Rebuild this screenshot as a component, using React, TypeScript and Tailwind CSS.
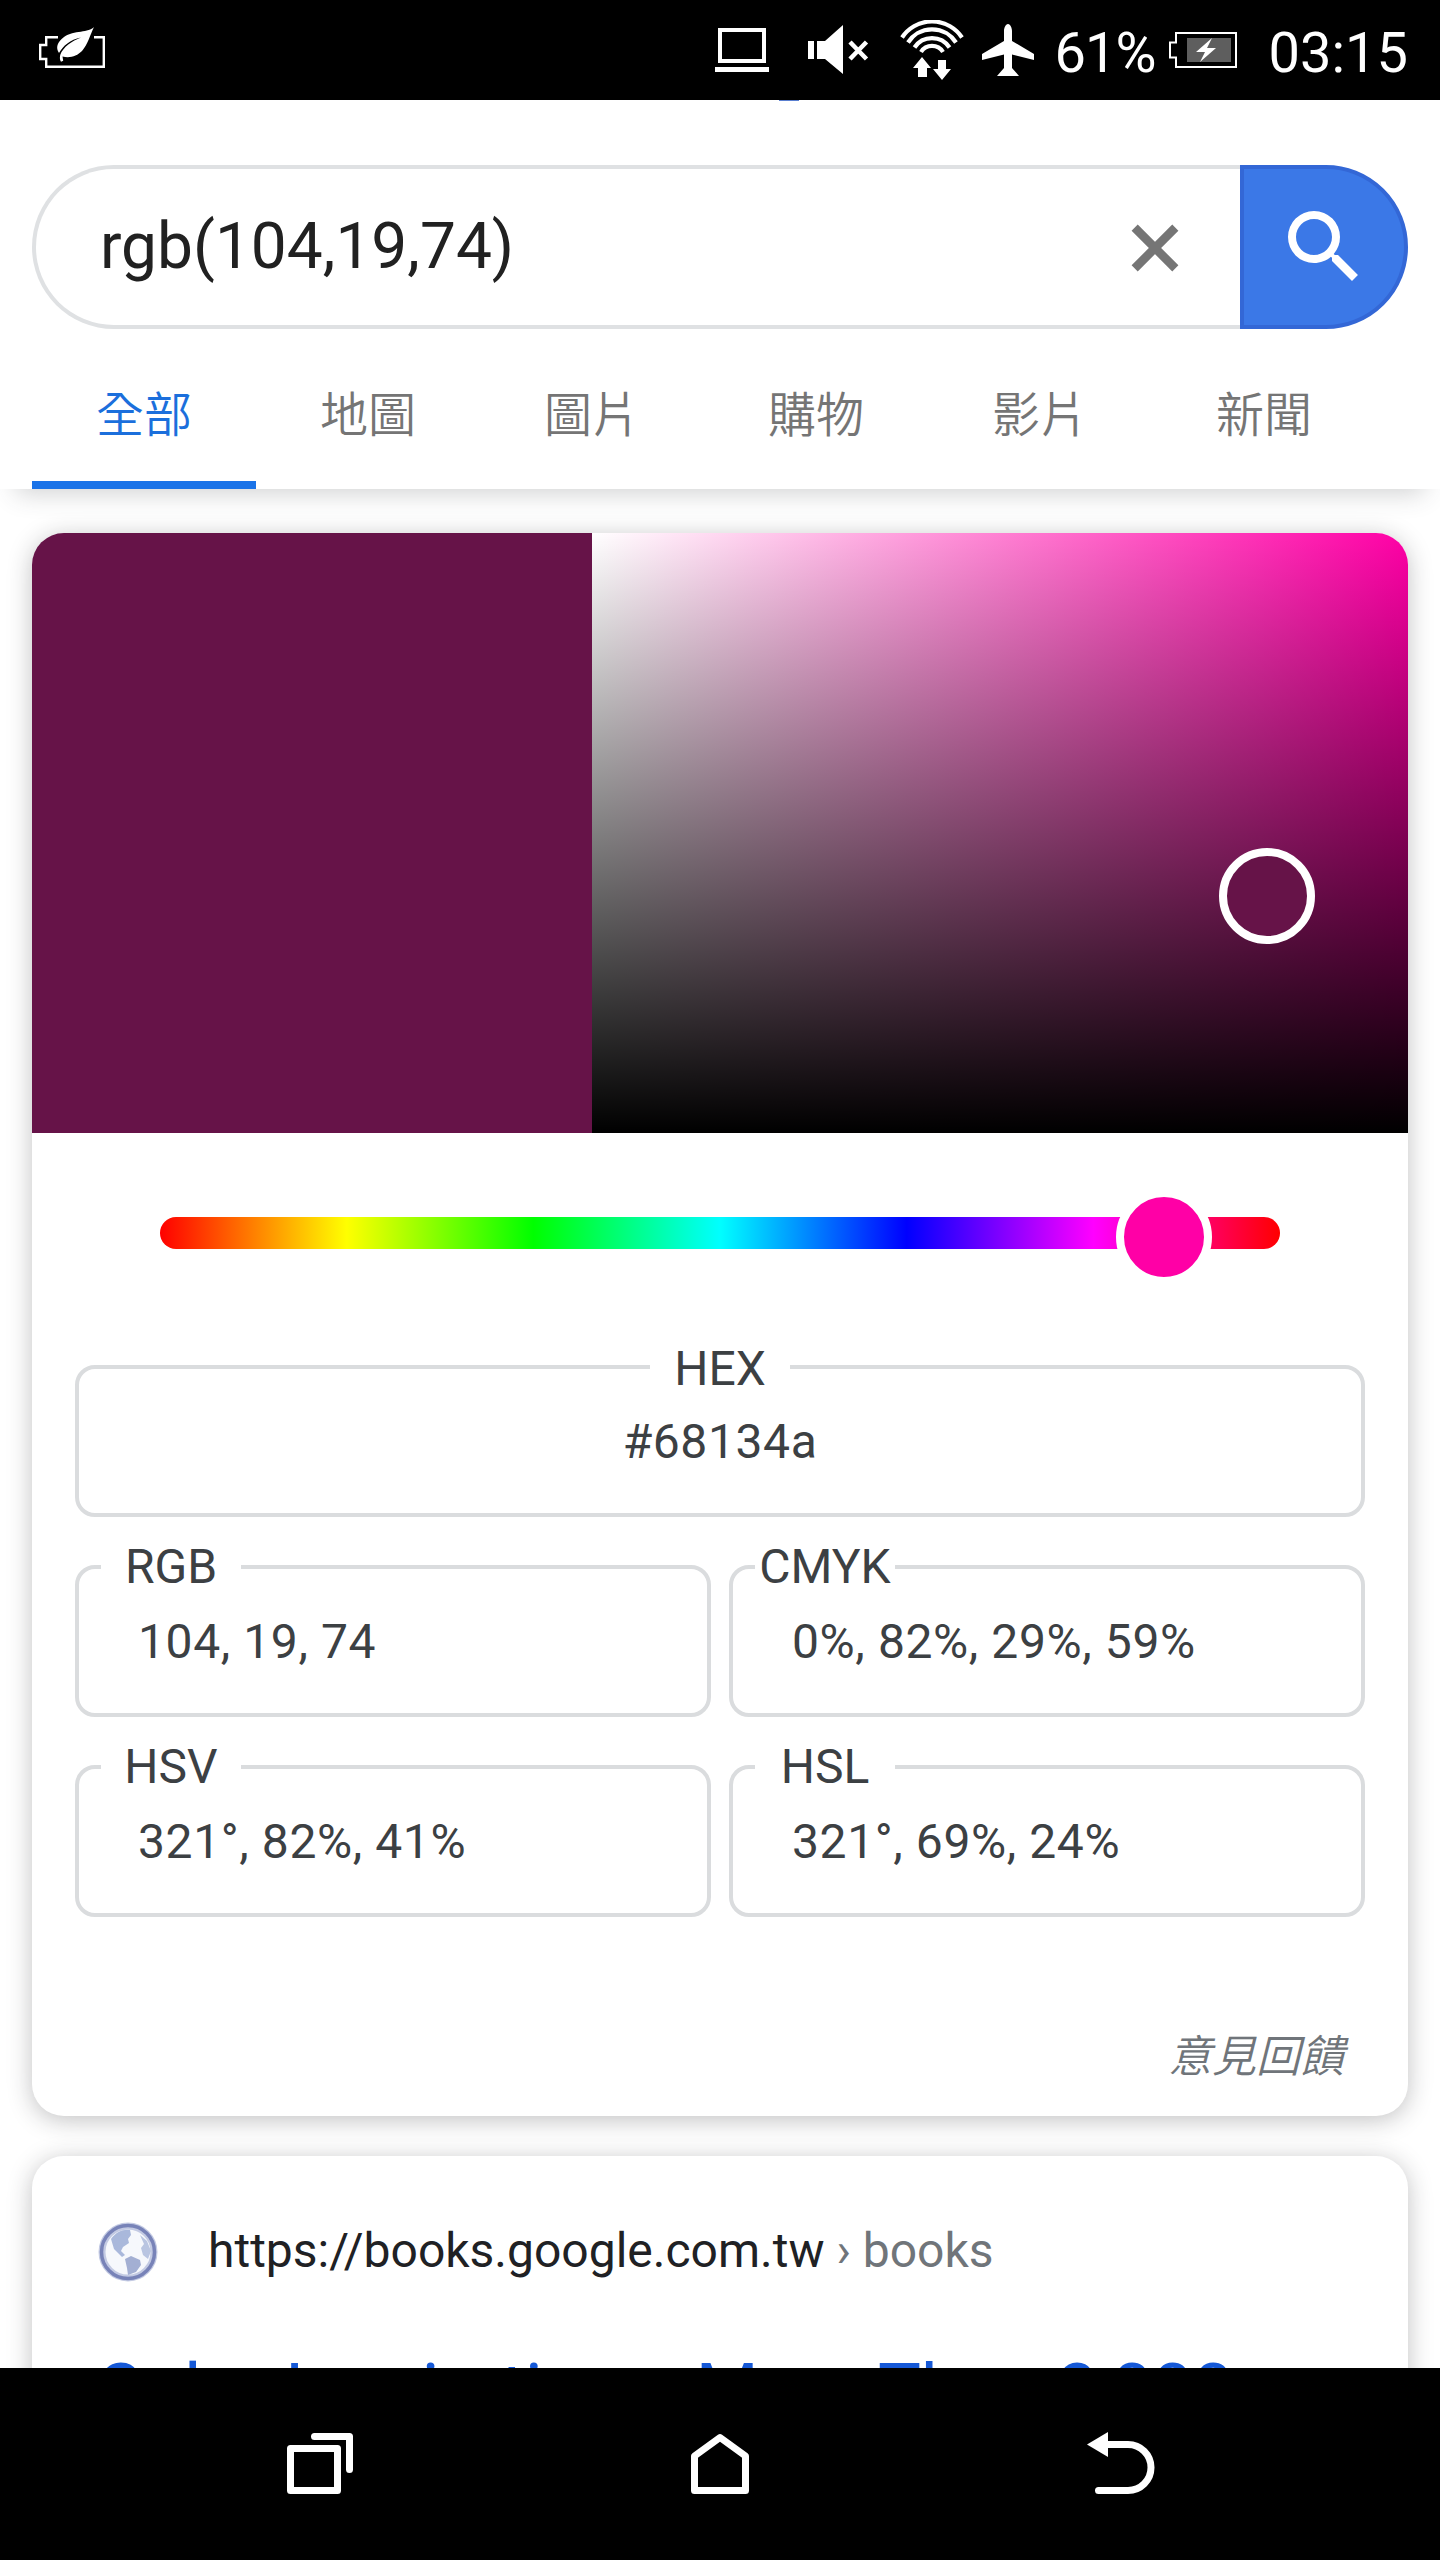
import React from 'react'

const tabs = ['全部', '地圖', '圖片', '購物', '影片', '新聞']

const formats = [
  { name: 'RGB', value: '104, 19, 74' },
  { name: 'CMYK', value: '0%, 82%, 29%, 59%' },
  { name: 'HSV', value: '321°, 82%, 41%' },
  { name: 'HSL', value: '321°, 69%, 24%' },
]

const StatusBar = () => (
  <div className="relative z-20 flex h-[100px] shrink-0 items-start bg-black text-white">
    {/* eco battery */}
    <svg className="ml-[36px] mt-[20px] h-[60px] w-[74px]" viewBox="36 20 74 60" fill="none">
      <path d="M58 37.2H46.2V45H40.2V59H46.2V66.8H103.8V37.2H94" stroke="#fff" strokeWidth="2.4" />
      <path
        d="M94 27C89 33 74 30 64 37C57 42 55.500 48 59 53C63 46 70 39.500 81 37.500C72 41 63 47 60.200 55C59.500 58 60 60.500 61 61.800L63.200 60.800L62.500 56.500C70 58.500 77 56 82 51C88 44 90 35 94 27Z"
        fill="#fff"
      />
    </svg>
    <svg className="ml-auto mt-[20px] h-[64px] w-[330px] shrink-0" viewBox="712 20 330 64" fill="none">
      {/* laptop */}
      <rect x="721" y="30" width="44" height="31" stroke="#fff" strokeWidth="4" />
      <rect x="716" y="67" width="54" height="5" fill="#fff" />
      {/* muted speaker */}
      <path d="M809 41H815V59H809ZM818 41H826L844 25V74L826 59H818Z" fill="#fff" />
      <path d="M851 42L867.500 59M867.500 42L851 59" stroke="#fff" strokeWidth="4.500" />
      {/* wifi */}
      <g stroke="#fff" strokeWidth="4.200">
        <path d="M903 37.500A36 36 0 0 1 963 37.500" />
        <path d="M909 42.500A28.500 28.500 0 0 1 957 42.500" />
        <path d="M915.500 47.500A21 21 0 0 1 950.500 47.500" />
        <path d="M922 52A13 13 0 0 1 944 52" />
      </g>
      <path d="M914 68L923 57L932 68H928V77H919V68ZM934 69H939V60H947V69H952L943 80Z" fill="#fff" />
      {/* airplane */}
      <path
        d="M1009 24C1011.500 24 1013 28 1013 31V41L1035 54V60L1013 54.500V68L1020 76H998L1005 68V54.500L983 60V54L1005 41V31C1005 28 1006.500 24 1009 24Z"
        fill="#fff"
      />
    </svg>
    <span className="ml-[14px] mt-[21px] w-[104px] whitespace-nowrap text-[56px] leading-[64px] tracking-[-1px]">61%</span>
    {/* charging battery */}
    <svg className="ml-[8px] mt-[28px] h-[44px] w-[72px] shrink-0" viewBox="1168 28 72 44" fill="none">
      <path d="M1177 33H1237V67H1177V57.500H1171V42.500H1177Z" stroke="#fff" strokeWidth="2" />
      <rect x="1188" y="38" width="44" height="24" fill="#5e5e5e" />
      <path d="M1213 38L1197 52H1206L1201 62L1217 48H1208Z" fill="#fff" />
    </svg>
    <span className="ml-[30px] mr-[32px] mt-[21px] whitespace-nowrap text-[56px] leading-[64px]">03:15</span>
  </div>
)

const Header = () => (
  <header className="relative z-10 h-[389px] shrink-0 bg-white px-8 pt-[65px] shadow-[0_20px_24px_-16px_rgba(60,64,67,0.24)]">
    {/* lower edge of the scrolled logo */}
    <div className="absolute left-[779px] top-0 h-px w-[20px] bg-[#5a7fd0]" />
    <div className="flex h-[164px]">
      <div className="flex flex-1 items-center justify-between rounded-l-[82px] border-4 border-r-0 border-[#dfe1e3] pl-[64px] pr-[45px]">
        <span className="text-[64px] leading-[76px] text-[#212121]">rgb(104,19,74)</span>
        <svg className="mt-0.5 h-20 w-20" viewBox="0 0 24 24" stroke="#757575" strokeWidth="2.600">
          <path d="M5.900 5.900L18.100 18.100M18.100 5.900L5.900 18.100" />
        </svg>
      </div>
      <button className="flex w-[168px] items-start rounded-r-[82px] border-4 border-[#3367d6] bg-[#3b78e7] pl-[32px] pt-[30px]">
        <svg className="h-24 w-24" viewBox="0 0 24 24" fill="#fff">
          <path d="M15.500 14h-.79l-.28-.27A6.471 6.471 0 0 0 16 9.500 6.500 6.500 0 1 0 9.500 16c1.610 0 3.090-.59 4.230-1.570l.27.28v.79l5 4.990L20.490 19l-4.990-5zm-6 0C7.010 14 5 11.990 5 9.500S7.010 5 9.500 5 14 7.010 14 9.500 11.990 14 9.500 14z" />
        </svg>
      </button>
    </div>
    <nav className="flex h-[160px]">
      {tabs.map((tab, i) => (
        <a
          key={tab}
          className={
            i === 0
              ? 'w-[224px] border-b-8 border-[#1a73e8] pt-[51px] text-center text-5xl leading-[72px] font-[350] text-[#1b6fdc]'
              : 'w-[224px] pt-[51px] text-center text-5xl leading-[72px] font-[350] text-[#757575]'
          }
        >
          {tab}
        </a>
      ))}
    </nav>
  </header>
)

const ColorPicker = () => (
  <section className="h-[1583px] shrink-0 rounded-[32px] bg-white text-[#3c4043] shadow-[0_4px_24px_rgba(32,33,36,0.28)]">
    <div className="flex h-[600px] overflow-hidden rounded-t-[32px]">
      <div className="w-[560px] bg-[#661348]" />
      <div className="relative flex-1 bg-[linear-gradient(to_top,#000,transparent),linear-gradient(to_right,#fff,#ff00a6)]">
        <div className="absolute left-[627px] top-[315px] h-24 w-24 rounded-full border-8 border-white bg-[#661348]" />
      </div>
    </div>

    <div className="relative mx-32 mt-[84px] h-8 rounded-full bg-[linear-gradient(to_right,#f00_0%,#ff0_16.67%,#0f0_33.33%,#0ff_50%,#00f_66.67%,#f0f_83.33%,#f00_100%)]">
      <div className="absolute left-[956px] top-[-28px] h-24 w-24 rounded-full border-8 border-white bg-[#ff00a6]" />
    </div>

    <div className="mt-24 grid grid-cols-2 gap-x-[18px] gap-y-7 px-[43px] text-5xl">
      <fieldset className="col-span-2 h-[172px] rounded-[20px] border-4 border-[#dadcde] text-center">
        <legend className="mx-auto h-11 w-[140px] pt-0.5 text-center leading-[44px]">HEX</legend>
        <div className="pt-[25px] leading-[56px] tracking-[0.6px]">#68134a</div>
      </fieldset>
      {formats.map((f) => (
        <fieldset key={f.name} className="h-[172px] rounded-[20px] border-4 border-[#dadcde] pl-[22px]">
          <legend className="flex h-11 w-[140px] justify-center leading-[44px]">{f.name}</legend>
          <div className="pl-[37px] pt-[25px] leading-[56px] tracking-[0.6px] whitespace-nowrap">{f.value}</div>
        </fieldset>
      ))}
    </div>

    <div className="mt-[108px] pr-[64px] text-right text-[44px] leading-[64px] font-[350] italic text-[#70757a]">意見回饋</div>
  </section>
)

const Result = () => (
  <section className="mt-10 h-[400px] shrink-0 rounded-[32px] bg-white px-[68px] pt-[63px] shadow-[0_4px_24px_rgba(32,33,36,0.28)]">
    <div className="flex h-16 items-center">
      <svg className="mt-0.5 -ml-0.5 h-[60px] w-[60px] shrink-0" viewBox="0 0 60 60">
        <circle cx="30" cy="30" r="26" fill="#f6f8fc" stroke="#c3cae3" strokeWidth="7" />
        <circle cx="30" cy="30" r="26.500" fill="none" stroke="#7883b8" strokeWidth="3.500" />
        <path d="M13 17C18 10 25 7 32 8L33 13L30 17L31 21L25 25L23 29L27 33L24 35L16 27Z" fill="#a9b8db" />
        <path d="M27 37L33 34L42 38L43 43L38 50L30 53L29 46Z" fill="#a3afd3" />
        <path d="M42 13L49 19L53 29L50 37L45 33L43 26L46 22Z" fill="#b9c5e1" />
      </svg>
      <div className="ml-[50px] whitespace-nowrap text-5xl leading-[64px] text-[#202124]">
        https://books.google.com.tw<span className="text-[#70757a]"> › books</span>
      </div>
    </div>
    <h3 className="mt-[64px] -ml-1 whitespace-nowrap text-[72px] leading-[88px] text-[#1558d6]">Color Inspirations: More Than 3,000</h3>
  </section>
)

const NavBar = () => (
  <div className="relative z-20 h-48 shrink-0 bg-black">
    <svg className="h-48 w-full" viewBox="0 2368 1440 192" fill="none" stroke="#fff" strokeWidth="7" strokeLinejoin="round" strokeLinecap="round">
      <rect x="290.500" y="2448.500" width="47" height="42" />
      <path d="M314.500 2436.500H349.500V2469.500" />
      <path d="M720 2437.500L694.500 2456V2490.500H745.500V2456Z" />
      <path d="M1108 2444.500H1128A23 23 0 0 1 1128 2490.500H1098.500" />
      <path d="M1087 2444.500L1108 2432V2457Z" fill="#fff" stroke="none" />
    </svg>
  </div>
)

const App = () => {
  return (
    <div className="flex h-[2560px] w-[1440px] flex-col overflow-hidden bg-white font-[Roboto,'Noto_Sans_CJK_TC',sans-serif]">
      <StatusBar />
      <Header />
      <main className="flex h-[1879px] shrink-0 flex-col overflow-hidden px-8 pt-11">
        <ColorPicker />
        <Result />
      </main>
      <NavBar />
    </div>
  )
}

export default App
